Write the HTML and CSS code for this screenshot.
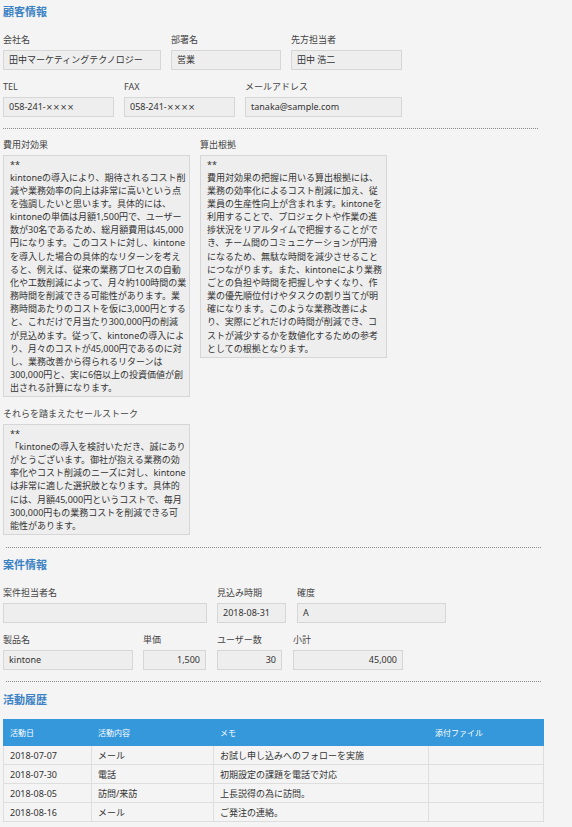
FILE: index.html
```html
<!DOCTYPE html>
<html lang="ja">
<head>
<meta charset="utf-8">
<title>顧客情報</title>
<link rel="stylesheet" href="styles.css">
</head>
<body>
<section class="section">
  <h2 class="heading">顧客情報</h2>
  <div class="row">
    <div class="field"><div class="label">会社名</div><div class="box w158">田中マーケティングテクノロジー</div></div>
    <div class="field"><div class="label">部署名</div><div class="box w110">営業</div></div>
    <div class="field"><div class="label">先方担当者</div><div class="box w111">田中 浩二</div></div>
  </div>
  <div class="row">
    <div class="field"><div class="label">TEL</div><div class="box w111">058-241-<span class="mask">××××</span></div></div>
    <div class="field"><div class="label">FAX</div><div class="box w111">058-241-<span class="mask">××××</span></div></div>
    <div class="field"><div class="label">メールアドレス</div><div class="box w157">tanaka@sample.com</div></div>
  </div>
  <div class="sep sep-top"></div>
  <div class="row trow first">
    <div class="field">
      <div class="label tlabel">費用対効果</div>
      <div class="tbox">**<br>kintoneの導入により、期待されるコスト削<br>減や業務効率の向上は非常に高いという点<br>を強調したいと思います。具体的には、<br>kintoneの単価は月額1,500円で、ユーザー<br>数が30名であるため、総月額費用は45,000<br>円になります。このコストに対し、kintone<br>を導入した場合の具体的なリターンを考え<br>ると、例えば、従来の業務プロセスの自動<br>化や工数削減によって、月々約100時間の業<br>務時間を削減できる可能性があります。業<br>務時間あたりのコストを仮に3,000円とする<br>と、これだけで月当たり300,000円の削減<br>が見込めます。従って、kintoneの導入によ<br>り、月々のコストが45,000円であるのに対<br>し、業務改善から得られるリターンは<br>300,000円と、実に6倍以上の投資価値が創<br>出される計算になります。</div>
    </div>
    <div class="field">
      <div class="label tlabel">算出根拠</div>
      <div class="tbox">**<br>費用対効果の把握に用いる算出根拠には、<br>業務の効率化によるコスト削減に加え、従<br>業員の生産性向上が含まれます。kintoneを<br>利用することで、プロジェクトや作業の進<br>捗状況をリアルタイムで把握することがで<br>き、チーム間のコミュニケーションが円滑<br>になるため、無駄な時間を減少させること<br>につながります。また、kintoneにより業務<br>ごとの負担や時間を把握しやすくなり、作<br>業の優先順位付けやタスクの割り当てが明<br>確になります。このような業務改善によ<br>り、実際にどれだけの時間が削減でき、コ<br>ストが減少するかを数値化するための参考<br>としての根拠となります。</div>
    </div>
  </div>
  <div class="row trow">
    <div class="field">
      <div class="label tlabel">それらを踏まえたセールストーク</div>
      <div class="tbox">**<br>「kintoneの導入を検討いただき、誠にあり<br>がとうございます。御社が抱える業務の効<br>率化やコスト削減のニーズに対し、kintone<br>は非常に適した選択肢となります。具体的<br>には、月額45,000円というコストで、毎月<br>300,000円もの業務コストを削減できる可<br>能性があります。</div>
    </div>
  </div>
</section>
<div class="sep"></div>
<section class="section">
  <h2 class="heading">案件情報</h2>
  <div class="row">
    <div class="field"><div class="label">案件担当者名</div><div class="box w204"></div></div>
    <div class="field gap11"><div class="label">見込み時期</div><div class="box w69">2018-08-31</div></div>
    <div class="field"><div class="label">確度</div><div class="box w149">A</div></div>
  </div>
  <div class="row">
    <div class="field"><div class="label">製品名</div><div class="box w130">kintone</div></div>
    <div class="field gap11"><div class="label">単価</div><div class="box w63 num">1,500</div></div>
    <div class="field gap11"><div class="label">ユーザー数</div><div class="box w65 num">30</div></div>
    <div class="field"><div class="label">小計</div><div class="box w110 num">45,000</div></div>
  </div>
</section>
<div class="sep"></div>
<section class="section">
  <h2 class="heading heading-table">活動履歴</h2>
  <table class="history">
    <colgroup><col class="c1"><col class="c2"><col class="c3"><col class="c4"></colgroup>
    <thead>
      <tr><th>活動日</th><th>活動内容</th><th>メモ</th><th>添付ファイル</th></tr>
    </thead>
    <tbody>
      <tr><td>2018-07-07</td><td>メール</td><td>お試し申し込みへのフォローを実施</td><td></td></tr>
      <tr><td>2018-07-30</td><td>電話</td><td>初期設定の課題を電話で対応</td><td></td></tr>
      <tr><td>2018-08-05</td><td>訪問/来訪</td><td>上長説得の為に訪問。</td><td></td></tr>
      <tr><td>2018-08-16</td><td>メール</td><td>ご発注の連絡。</td><td></td></tr>
    </tbody>
  </table>
</section>
</body>
</html>
```

FILE: styles.css
```css
html, body {
  background: #f4f4f4;
}
body {
  margin: 0;
  padding: 4px 0 0 3px;
  font-family: "Noto Sans", "Noto Sans CJK JP", sans-serif;
  font-size: 9px;
  color: #333;
}
.heading {
  margin: 0 0 13px;
  font-size: 11px;
  line-height: 16px;
  font-weight: bold;
  color: #3b82c4;
}
.heading-table {
  margin-bottom: 11.5px;
}
.row {
  display: flex;
  align-items: flex-start;
  gap: 10px;
  margin-bottom: 9.5px;
}
.row:last-child {
  margin-bottom: 0;
}
.gap11 {
  margin-right: 1px;
}
.label {
  line-height: 13px;
  margin-bottom: 4px;
  color: #444;
  white-space: nowrap;
}
.box {
  box-sizing: border-box;
  height: 20px;
  border: 1px solid #d6d6d6;
  background: #eeeeee;
  padding: 0 5px;
  line-height: 18px;
  white-space: nowrap;
  color: #333;
}
.box.num {
  text-align: right;
}
.mask {
  font-family: "DejaVu Sans", sans-serif;
  font-size: 8.5px;
}
.w158 { width: 158px; }
.w110 { width: 110px; }
.w111 { width: 111px; }
.w157 { width: 157px; }
.w204 { width: 204px; }
.w69 { width: 69px; }
.w149 { width: 149px; }
.w130 { width: 130px; }
.w63 { width: 63px; }
.w65 { width: 65px; }

.sep {
  width: 535px;
  border-top: 1px dotted #8a8a8a;
  margin: 11.5px 0 9.5px 3px;
}
.sep-top {
  margin: 11px 0 9.5px 0;
}
.trow {
  margin-bottom: 10px;
}
.tlabel {
  margin-bottom: 3.5px;
}
.tbox {
  box-sizing: border-box;
  width: 187px;
  border: 1px solid #d6d6d6;
  background: #eeeeee;
  padding: 2px 6px;
  line-height: 13.15px;
  white-space: nowrap;
  color: #333;
}
.trow:last-child {
  margin-bottom: 0;
}

.history {
  border-collapse: collapse;
  width: 540px;
  table-layout: fixed;
}
.c1 { width: 88px; }
.c2 { width: 122px; }
.c3 { width: 215px; }
.c4 { width: 115px; }
.history th {
  height: 25px;
  padding: 0 6px;
  background: #3498db;
  color: #fff;
  font-size: 8px;
  font-weight: normal;
  text-align: left;
  border: 1px solid #3498db;
}
.history td {
  height: 18px;
  padding: 0 6px;
  border: 1px solid #dedede;
  line-height: 17px;
  white-space: nowrap;
  color: #333;
}
```
